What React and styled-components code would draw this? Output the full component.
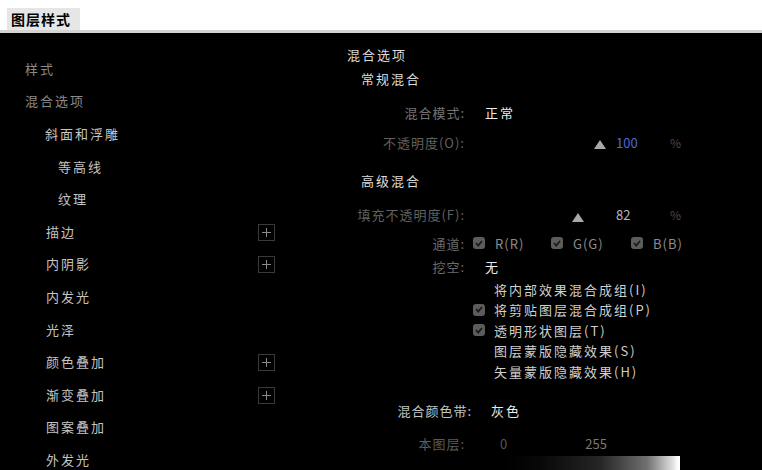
import React from "react";
import styled, { createGlobalStyle } from "styled-components";

const Global = createGlobalStyle`
  html, body { margin: 0; padding: 0; background: #000; }
  body { width: 762px; height: 470px; overflow: hidden; font-family: "Noto Sans CJK SC", "Noto Sans", sans-serif; }
`;

const Frame = styled.div`
  width: 762px;
  height: 470px;
  display: flex;
  flex-direction: column;
  background: #000;
  overflow: hidden;
`;

const TitleBar = styled.div`
  height: 33px;
  background: #fff;
  border-bottom: 3px solid #d4d4d4;
  display: flex;
  align-items: flex-start;
  padding: 8px 0 0 7px;
  box-sizing: border-box;
`;

const TitleChip = styled.div`
  background: #e6e6e6;
  color: #000;
  font-weight: 700;
  font-size: 14px;
  letter-spacing: 1px;
  line-height: 22px;
  padding: 0 9px 0 4px;
`;

const Body = styled.div`
  flex: 1;
  display: flex;
`;

const Sidebar = styled.div`
  width: 330px;
  padding-top: 19px;
  display: flex;
  flex-direction: column;
`;

const NavRow = styled.div`
  height: 32.6px;
  width: 275px;
  display: flex;
  align-items: center;
  padding-left: ${(p) => p.$indent}px;
  box-sizing: border-box;
  font-size: 13px;
  letter-spacing: 2px;
  color: ${(p) => (p.$dim ? "#8a8a8a" : "#c4c4c4")};
`;

const PlusBox = styled.div`
  margin-left: auto;
  margin-top: 2px;
  width: 15px;
  height: 15px;
  border: 1px solid #3a3a3a;
  display: flex;
  align-items: center;
  justify-content: center;
`;

const Panel = styled.div`
  flex: 1;
  padding: 12px 0 0 17px;
  display: flex;
  flex-direction: column;
  font-size: 13px;
  letter-spacing: 2px;
`;

const Heading = styled.div`
  height: 20px;
  line-height: 20px;
  color: #dcdcdc;
  margin-top: ${(p) => p.$mt || 0}px;
  padding-left: ${(p) => p.$indent || 0}px;
`;

const Field = styled.div`
  display: grid;
  grid-template-columns: 118px 1fr;
  column-gap: 8px;
  align-items: center;
  height: ${(p) => p.$h || 22}px;
  margin-top: ${(p) => p.$mt || 0}px;
`;

const Label = styled.div`
  text-align: right;
  white-space: nowrap;
  letter-spacing: 1px;
  color: ${(p) => p.$color || "#707070"};
  margin-right: ${(p) => p.$shift || 0}px;
`;

const Content = styled.div`
  display: flex;
  align-items: center;
  white-space: nowrap;
`;

const Value = styled.span`
  color: #ececec;
  padding-left: ${(p) => p.$pad ?? 12}px;
`;

const Track = styled.div`
  position: relative;
  width: 122px;
  height: 22px;
  margin-left: 5px;
`;

const Thumb = styled.div`
  position: absolute;
  top: ${(p) => p.$top}px;
  width: 0;
  height: 0;
  margin-left: -6px;
  border-left: 6px solid transparent;
  border-right: 6px solid transparent;
  border-bottom: 9px solid #a8a8a8;
`;

const Num = styled.span`
  width: 54px;
  margin-left: 16px;
  letter-spacing: 0;
  color: ${(p) => p.$color};
`;

const Pct = styled.span`
  color: #4a4a4a;
  font-size: 12px;
`;

const ChannelGroup = styled.div`
  width: ${(p) => p.$w}px;
  display: flex;
  align-items: center;
  gap: 10px;
  color: #8c8c8c;
  letter-spacing: 1px;
`;

const Check = styled.div`
  width: 12px;
  height: 12px;
  border-radius: 3px;
  background: ${(p) => (p.$off ? "transparent" : "#5c5c5c")};
  display: flex;
  align-items: center;
  justify-content: center;
  flex-shrink: 0;
`;

const OptionRow = styled.div`
  height: 20.5px;
  display: flex;
  align-items: center;
  padding-left: 126px;
  gap: 9px;
  color: #cfcfcf;
  margin-top: ${(p) => p.$mt || 0}px;
`;

const Ramp = styled.div`
  width: 172px;
  height: 14px;
  margin: 1px 0 0 159px;
  background: linear-gradient(to right, #000 0%, #080808 20%, #262626 55%, #707070 82%, #e0e0e0 97%, #fff 100%);
  border-right: 2px solid #fff;
`;

const Mini = styled.span`
  color: ${(p) => p.$color};
  letter-spacing: 0;
  margin-left: ${(p) => p.$ml}px;
`;

const Tick = () => (
  <svg width="8" height="7" viewBox="0 0 8 7">
    <path d="M1 3 L3.2 5.5 L7 1" stroke="#1a1a1a" strokeWidth="1.8" fill="none" />
  </svg>
);

const Plus = () => (
  <svg width="9" height="9" viewBox="0 0 9 9">
    <path d="M4.5 0 V9 M0 4.5 H9" stroke="#8a8a8a" strokeWidth="1" />
  </svg>
);

const nav = [
  { t: "样式", i: 25, dim: true },
  { t: "混合选项", i: 25, dim: true },
  { t: "斜面和浮雕", i: 45 },
  { t: "等高线", i: 58 },
  { t: "纹理", i: 58 },
  { t: "描边", i: 46, plus: true },
  { t: "内阴影", i: 46, plus: true },
  { t: "内发光", i: 46 },
  { t: "光泽", i: 46 },
  { t: "颜色叠加", i: 46, plus: true },
  { t: "渐变叠加", i: 46, plus: true },
  { t: "图案叠加", i: 46 },
  { t: "外发光", i: 46 },
];

const options = [
  { t: "将内部效果混合成组(I)", on: false },
  { t: "将剪贴图层混合成组(P)", on: true },
  { t: "透明形状图层(T)", on: true },
  { t: "图层蒙版隐藏效果(S)", on: false },
  { t: "矢量蒙版隐藏效果(H)", on: false },
];

const Slider = ({ pct, top }) => (
  <Track>
    <Thumb $top={top} style={{ left: `${pct * 122}px` }} />
  </Track>
);

export default function App() {
  return (
    <Frame>
      <Global />
      <TitleBar>
        <TitleChip>图层样式</TitleChip>
      </TitleBar>
      <Body>
        <Sidebar>
          {nav.map((n) => (
            <NavRow key={n.t} $indent={n.i} $dim={n.dim}>
              {n.t}
              {n.plus && (
                <PlusBox>
                  <Plus />
                </PlusBox>
              )}
            </NavRow>
          ))}
        </Sidebar>
        <Panel>
          <Heading>混合选项</Heading>
          <Heading $indent={14} $mt={4}>常规混合</Heading>
          <Field $mt={12}>
            <Label $color="#747474">混合模式:</Label>
            <Content><Value>正常</Value></Content>
          </Field>
          <Field $mt={8}>
            <Label $color="#606060">不透明度(O):</Label>
            <Content>
              <Slider pct={1} top={9} />
              <Num $color="#4a68d8">100</Num>
              <Pct>%</Pct>
            </Content>
          </Field>
          <Heading $indent={14} $mt={18}>高级混合</Heading>
          <Field $mt={12}>
            <Label $color="#606060">填充不透明度(F):</Label>
            <Content>
              <Slider pct={0.82} top={10} />
              <Num $color="#b8b8b8">82</Num>
              <Pct>%</Pct>
            </Content>
          </Field>
          <Field $mt={7}>
            <Label $color="#6a6a6a">通道:</Label>
            <Content>
              <ChannelGroup $w={78}><Check><Tick /></Check>R(R)</ChannelGroup>
              <ChannelGroup $w={80}><Check><Tick /></Check>G(G)</ChannelGroup>
              <ChannelGroup $w={60}><Check><Tick /></Check>B(B)</ChannelGroup>
            </Content>
          </Field>
          <Field $mt={1}>
            <Label $color="#6a6a6a">挖空:</Label>
            <Content><Value>无</Value></Content>
          </Field>
          {options.map((o, idx) => (
            <OptionRow key={o.t} $mt={idx === 0 ? 2 : 0}>
              <Check $off={!o.on}>{o.on && <Tick />}</Check>
              {o.t}
            </OptionRow>
          ))}
          <Field $mt={18}>
            <Label $color="#c4c4c4" $shift={-7}>混合颜色带:</Label>
            <Content><Value $pad={18}>灰色</Value></Content>
          </Field>
          <Field $mt={11}>
            <Label $color="#5a5a5a">本图层:</Label>
            <Content>
              <Mini $color="#555" $ml={27}>0</Mini>
              <Mini $color="#7a7a7a" $ml={78}>255</Mini>
            </Content>
          </Field>
          <Ramp />
        </Panel>
      </Body>
    </Frame>
  );
}
